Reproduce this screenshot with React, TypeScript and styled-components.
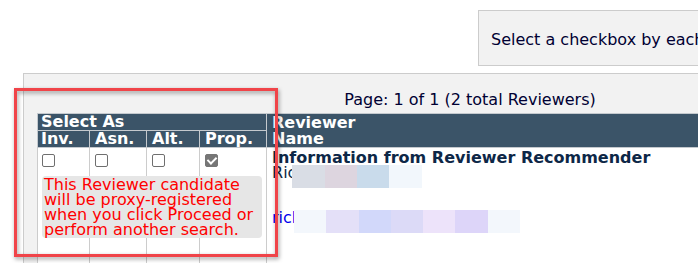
import React from 'react'
import styled, { createGlobalStyle } from 'styled-components'

const GlobalStyle = createGlobalStyle`
  html, body {
    margin: 0;
    padding: 0;
    background: #fff;
    overflow: hidden;
  }
  body {
    font-family: 'DejaVu Sans', Verdana, sans-serif;
    font-size: 16px;
    color: #000033;
  }
`

const Page = styled.div`
  position: relative;
  width: 894px;
  padding: 10px 0 0 23px;
`

const TopRow = styled.div`
  display: flex;
  justify-content: flex-end;
  margin-bottom: 7px;
`

const Instructions = styled.div`
  box-sizing: border-box;
  width: 439px;
  height: 56px;
  padding: 19px 12px 0;
  line-height: 19px;
  background: #f2f2f2;
  border: 1px solid #cccccc;
  white-space: nowrap;
  overflow: hidden;
`

const Panel = styled.div`
  box-sizing: border-box;
  height: 320px;
  padding: 16px 13px 0;
  background: #f2f2f2;
  border: 1px solid #cccccc;
`

const Pager = styled.div`
  text-align: center;
  line-height: 19px;
  margin-bottom: 4px;
`

const Grid = styled.table`
  width: 100%;
  table-layout: fixed;
  border-collapse: collapse;
  background: #fff;
`

const HeadCell = styled.th<{ $indent?: number }>`
  padding: 0 0 0 ${(p) => p.$indent ?? 4}px;
  background: #3b5468;
  color: #fff;
  font-weight: bold;
  text-align: left;
  line-height: 16px;
  vertical-align: bottom;
  border: 1px solid #c4c9ce;
  white-space: nowrap;
  overflow: hidden;
`

const Cell = styled.td<{ $indent?: number }>`
  height: 130px;
  padding: 6px 0 0 ${(p) => p.$indent ?? 5}px;
  vertical-align: top;
  border: 1px solid #cccccc;
`

const ReviewerCell = styled.td`
  padding: 2px 0 0 5px;
  vertical-align: top;
  border: 1px solid #cccccc;
  color: #0d2747;
  line-height: 15px;
`

const Check = styled.input.attrs({ type: 'checkbox' })`
  appearance: none;
  position: relative;
  display: block;
  box-sizing: border-box;
  width: 13px;
  height: 13px;
  margin: 0;
  background: #fff;
  border: 1px solid #6f6f6f;
  border-radius: 2px;

  &:checked {
    background: #767676;
    border-color: #767676;
  }

  &:checked::after {
    content: '';
    position: absolute;
    left: 3px;
    top: 0px;
    width: 4px;
    height: 7px;
    border: solid #fff;
    border-width: 0 2px 2px 0;
    transform: rotate(45deg);
  }
`

const ProxyNote = styled.div`
  position: relative;
  z-index: 1;
  box-sizing: border-box;
  width: 220px;
  margin-top: 9px;
  padding: 1px 2px;
  background: #e6e6e6;
  border-radius: 4px;
  color: #ff0000;
  line-height: 15px;
`

const InfoTitle = styled.div`
  font-weight: bold;
  white-space: nowrap;
`

const Line = styled.div<{ $gap?: number }>`
  display: flex;
  align-items: flex-start;
  height: 15px;
  margin-top: ${(p) => p.$gap ?? 0}px;
  white-space: nowrap;
`

const EmailLink = styled.a`
  color: #0000ee;
  text-decoration: none;
`

const Pixelated = styled.span<{ $shift: number }>`
  display: inline-flex;
  height: 23px;
  margin-left: ${(p) => p.$shift}px;
`

const Pixel = styled.span<{ $c: string }>`
  width: 32.3px;
  height: 23px;
  background: ${(p) => p.$c};
`

const Callout = styled.div`
  position: absolute;
  left: 14px;
  top: 88px;
  box-sizing: border-box;
  width: 264px;
  height: 169px;
  border: 3px solid #f04449;
  filter: drop-shadow(1px 2px 2px rgba(0, 0, 0, 0.4));
  pointer-events: none;
`

const nameBlur = ['#d9dde5', '#ddd5df', '#c9dbeb', '#f2f7fc']
const mailBlur = ['#f3f7fc', '#e4e0f8', '#d2d8fa', '#dcdaf7', '#ede3fa', '#ddd5f9', '#f3f7fc']

export default function App() {
  return (
    <Page>
      <GlobalStyle />
      <TopRow>
        <Instructions>Select a checkbox by each Reviewer to choose how they are added.</Instructions>
      </TopRow>
      <Panel>
        <Pager>Page: 1 of 1 (2 total Reviewers)</Pager>
        <Grid>
          <colgroup>
            <col style={{ width: 52 }} />
            <col style={{ width: 57 }} />
            <col style={{ width: 53 }} />
            <col style={{ width: 67 }} />
            <col />
          </colgroup>
          <thead>
            <tr>
              <HeadCell colSpan={4} $indent={3}>Select As</HeadCell>
              <HeadCell rowSpan={2} $indent={5}>
                Reviewer
                <br />
                Name
              </HeadCell>
            </tr>
            <tr>
              <HeadCell $indent={3}>Inv.</HeadCell>
              <HeadCell $indent={5}>Asn.</HeadCell>
              <HeadCell $indent={5}>Alt.</HeadCell>
              <HeadCell $indent={5}>Prop.</HeadCell>
            </tr>
          </thead>
          <tbody>
            <tr>
              <Cell $indent={4}>
                <Check aria-label='Invited' />
                <ProxyNote>
                  This Reviewer candidate will be proxy-registered when you click Proceed or perform another search.
                </ProxyNote>
              </Cell>
              <Cell>
                <Check aria-label='Assigned' />
              </Cell>
              <Cell>
                <Check aria-label='Alternate' />
              </Cell>
              <Cell>
                <Check aria-label='Proxy' defaultChecked />
              </Cell>
              <ReviewerCell>
                <InfoTitle>Information from Reviewer Recommender</InfoTitle>
                <Line>
                  <span>Ric</span>
                  <Pixelated $shift={-4}>
                    {nameBlur.map((c, i) => (
                      <Pixel key={i} $c={c} />
                    ))}
                  </Pixelated>
                </Line>
                <Line $gap={30}>
                  <EmailLink href='#'>rich</EmailLink>
                  <Pixelated $shift={-8}>
                    {mailBlur.map((c, i) => (
                      <Pixel key={i} $c={c} />
                    ))}
                  </Pixelated>
                </Line>
              </ReviewerCell>
            </tr>
          </tbody>
        </Grid>
      </Panel>
      <Callout />
    </Page>
  )
}
